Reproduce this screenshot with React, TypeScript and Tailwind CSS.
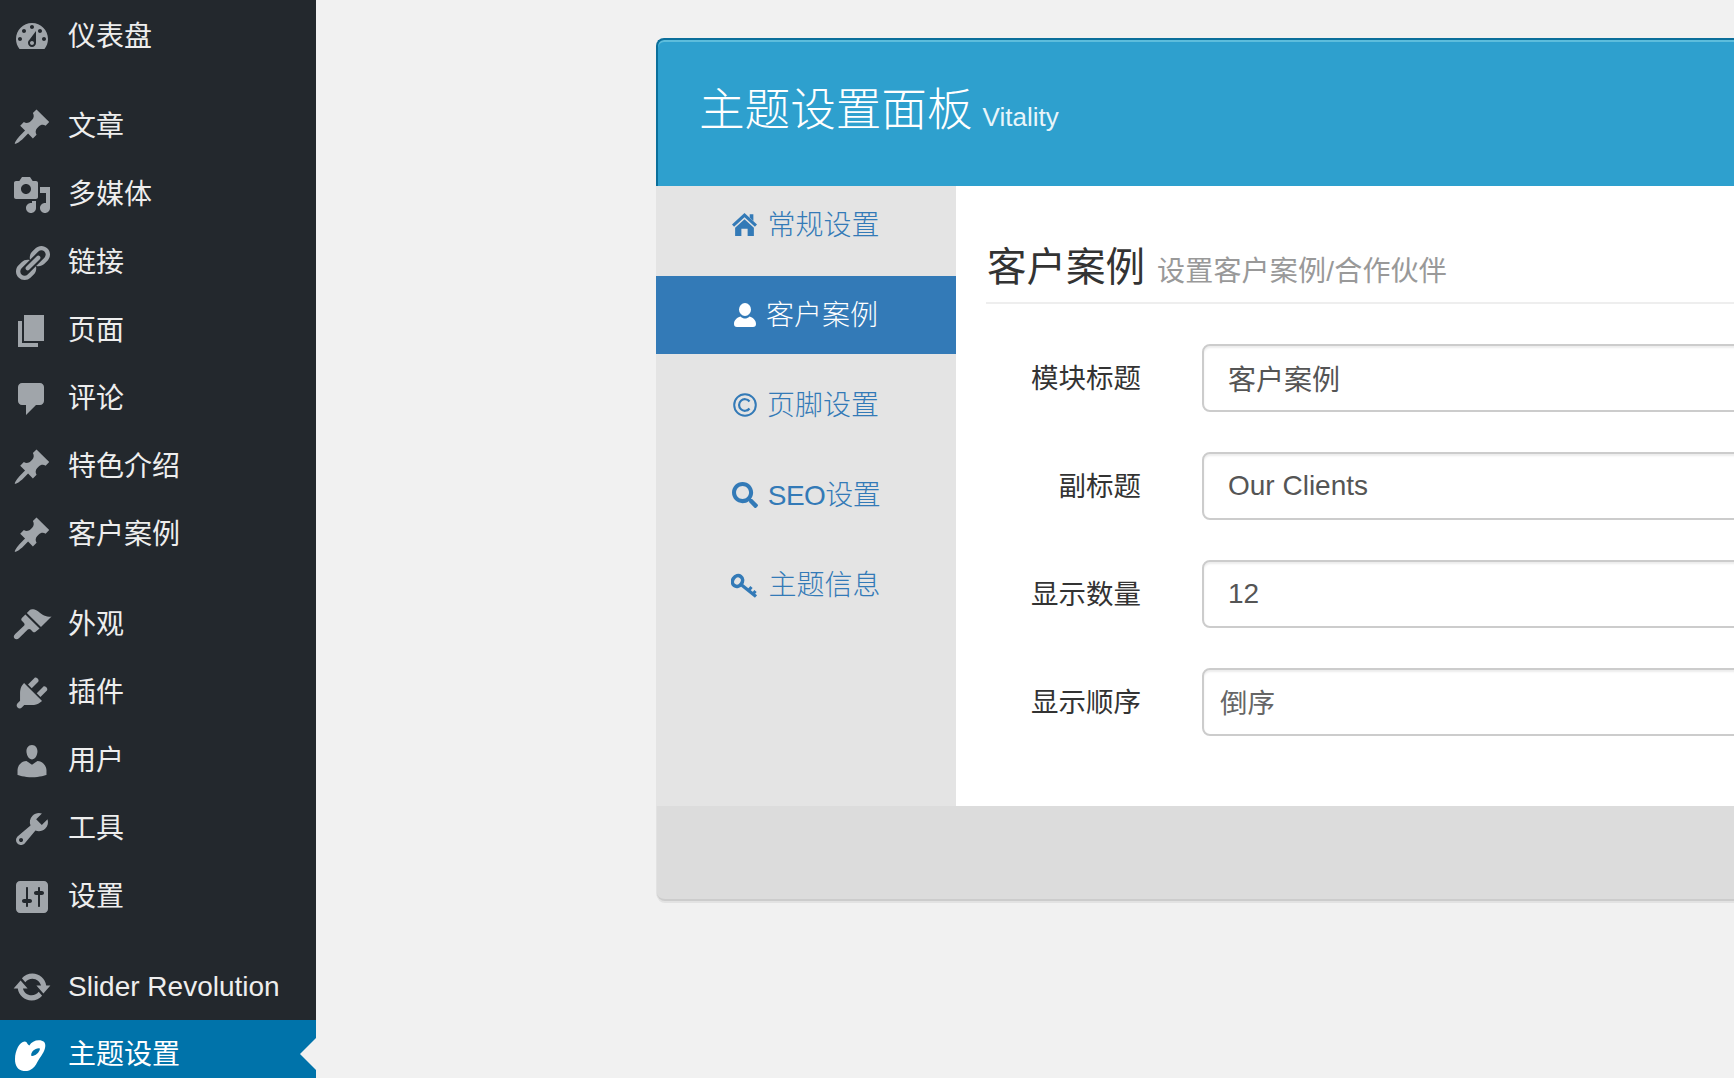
import React from "react";
import { FaSearch } from "react-icons/fa";

const dashicons: Record<string, string> = {
  dashboard:
    "M3.76 16h12.48c1.1-1.37 1.76-3.11 1.76-5 0-4.42-3.58-8-8-8s-8 3.58-8 8c0 1.89.66 3.63 1.76 5zM10 4c.55 0 1 .45 1 1s-.45 1-1 1-1-.45-1-1 .45-1 1-1zM6 6c.55 0 1 .45 1 1s-.45 1-1 1-1-.45-1-1 .45-1 1-1zm8 0c.55 0 1 .45 1 1s-.45 1-1 1-1-.45-1-1 .45-1 1-1zm-5.37 5.55L12 7v6c0 1.1-.9 2-2 2s-2-.9-2-2c0-.57.24-1.08.63-1.45zM4 10c.55 0 1 .45 1 1s-.45 1-1 1-1-.45-1-1 .45-1 1-1zm12 0c.55 0 1 .45 1 1s-.45 1-1 1-1-.45-1-1 .45-1 1-1zm-5 3c0-.55-.45-1-1-1s-1 .45-1 1 .45 1 1 1 1-.45 1-1z",
  post: "M10.44 3.02l1.82-1.82 6.36 6.35-1.83 1.82c-1.05-.68-2.48-.57-3.41.36l-.75.75c-.92.93-1.04 2.35-.35 3.41l-1.83 1.82-2.41-2.41-2.8 2.79c-.42.42-3.38 2.71-3.8 2.29s1.86-3.39 2.28-3.81l2.79-2.79L4.1 9.36l1.83-1.82c1.05.69 2.48.57 3.4-.36l.75-.75c.93-.92 1.05-2.35.36-3.41z",
  media:
    "M13 11V4c0-.55-.45-1-1-1h-1.67L9 1H5L3.67 3H2c-.55 0-1 .45-1 1v7c0 .55.45 1 1 1h10c.55 0 1-.45 1-1zM7 4.5c1.38 0 2.5 1.12 2.5 2.5S8.38 9.5 7 9.5 4.5 8.38 4.5 7 5.62 4.5 7 4.5zM14 6h5v10.5c0 1.38-1.12 2.5-2.5 2.5S14 17.88 14 16.5s1.12-2.5 2.5-2.5c.17 0 .34.02.5.05V9h-3V6zm-4 8.05V13h2v3.5c0 1.38-1.12 2.5-2.5 2.5S7 17.88 7 16.5 8.12 14 9.5 14c.17 0 .34.02.5.05z",
  links:
    "M17.74 2.76c1.68 1.69 1.68 4.41 0 6.1l-1.53 1.52c-1.12 1.12-2.7 1.47-4.14 1.09l2.62-2.61.76-.77.76-.76c.84-.84.84-2.2 0-3.04-.84-.85-2.2-.85-3.04 0l-.77.76-3.38 3.38c-.37-1.44-.02-3.02 1.1-4.14l1.52-1.53c1.69-1.68 4.42-1.68 6.1 0zM8.59 13.43l5.34-5.34c.42-.42.42-1.1 0-1.52-.44-.43-1.13-.39-1.53 0l-5.33 5.34c-.42.42-.42 1.1 0 1.52.44.43 1.13.39 1.52 0zm-.76 2.29l4.14-4.15c.38 1.44.03 3.02-1.09 4.14l-1.52 1.53c-1.69 1.68-4.41 1.68-6.1 0-1.68-1.68-1.68-4.42 0-6.1l1.53-1.52c1.12-1.12 2.7-1.47 4.14-1.1l-4.14 4.15c-.85.84-.85 2.2 0 3.05.84.84 2.2.84 3.04 0z",
  page: "M6 15V2h10v13H6zm-1 1h8v2H3V5h2v11z",
  comments:
    "M5 2h9c1.1 0 2 .9 2 2v7c0 1.1-.9 2-2 2h-2l-5 5v-5H5c-1.1 0-2-.9-2-2V4c0-1.1.9-2 2-2z",
  appearance:
    "M14.48 11.06L7.41 3.99l1.5-1.5c.5-.56 2.3-.47 3.51.32 1.21.8 1.43 1.28 2.91 2.1 1.18.64 2.45 1.26 4.45.85zM13.77 11.77L6.7 4.7 4.93 6.47c-.39.39-.39 1.02 0 1.41l1.06 1.06c.39.39.39 1.03 0 1.42l-4.4 4.2c-.8.75-.9 1.6-.3 2.2.6.6 1.5.5 2.3-.3l4.3-4.2c.39-.39 1.03-.39 1.42 0l1.06 1.06c.39.39 1.02.39 1.41 0z",
  plugins:
    "M13.11 4.36L9.87 7.6 8 5.73l3.24-3.24c.35-.34 1.05-.2 1.56.32.52.51.66 1.21.31 1.55zm-8 1.77l.91-1.12 9.01 9.01-1.19.84c-.71.71-2.63 1.16-3.82 1.16H6.14L4.9 17.26c-.59.59-1.54.59-2.12 0-.59-.58-.59-1.53 0-2.12l1.24-1.24v-3.88c0-1.13.4-3.19 1.09-3.89zm7.26 3.97l3.24-3.24c.34-.35 1.04-.21 1.55.31.52.51.66 1.21.31 1.55l-3.24 3.25z",
  users:
    "M10 9.25c-2.27 0-2.73-3.44-2.73-3.44C7 4.02 7.82 2 9.97 2c2.16 0 2.98 2.02 2.71 3.81 0 0-.41 3.44-2.68 3.44zm0 2.57L12.72 10c2.39 0 4.52 2.33 4.52 4.53v2.49s-3.65 1.13-7.24 1.13c-3.65 0-7.24-1.13-7.24-1.13v-2.49c0-2.25 1.94-4.48 4.47-4.48z",
  tools:
    "M16.68 9.77c-1.34 1.34-3.3 1.67-4.95.99l-5.41 6.52c-.99.99-2.59.99-3.58 0s-.99-2.59 0-3.57l6.52-5.42c-.68-1.65-.35-3.61.99-4.95 1.28-1.28 3.12-1.62 4.72-1.06l-2.89 2.89 2.82 2.82 2.86-2.87c.53 1.58.18 3.39-1.08 4.65zM3.81 16.21c.4.39 1.04.39 1.43 0 .4-.4.4-1.04 0-1.43-.39-.4-1.03-.4-1.43 0-.39.39-.39 1.03 0 1.43z",
  settings:
    "M18 16V4c0-1.1-.9-2-2-2H4c-1.1 0-2 .9-2 2v12c0 1.1.9 2 2 2h12c1.1 0 2-.9 2-2zM8 11h1c.55 0 1 .45 1 1s-.45 1-1 1H8v1.5c0 .28-.22.5-.5.5s-.5-.22-.5-.5V13H6c-.55 0-1-.45-1-1s.45-1 1-1h1V5.5c0-.28.22-.5.5-.5s.5.22.5.5V11zm5-2h-1c-.55 0-1-.45-1-1s.45-1 1-1h1V5.5c0-.28.22-.5.5-.5s.5.22.5.5V7h1c.55 0 1 .45 1 1s-.45 1-1 1h-1v5.5c0 .28-.22.5-.5.5s-.5-.22-.5-.5V9z",
  update:
    "M10.2 3.28c3.53 0 6.43 2.61 6.92 6h2.08l-3.5 4-3.5-4h2.32c-.45-1.97-2.21-3.44-4.32-3.44-1.45 0-2.73.71-3.54 1.78L4.95 5.66C6.23 4.2 8.11 3.28 10.2 3.28zm-.4 13.44c-3.52 0-6.43-2.61-6.92-6H.8l3.5-4c1.17 1.33 2.33 2.67 3.5 4H5.48c.45 1.97 2.21 3.44 4.32 3.44 1.45 0 2.73-.71 3.54-1.78l1.71 1.95c-1.28 1.46-3.15 2.39-5.25 2.39z",
  art: "M8.67 5.2C9.6 3.6 11.4 2.6 13.4 2.6c2.2 0 3.6 1 3.2 3.400C16.200 8.600 14.400 10.600 13.200 12.600 12.400 14 11.800 15.400 10.400 16.600 9 17.800 7.400 18.200 5.800 18 3 17.700 1.400 15.300 1.500 12 1.600 8 3.600 3.400 6.400 3.300 7.600 3.300 7.600 5 8.670 5.200zM9.600 10C9.600 8.400 11.200 6.800 13.400 6.600 13.900 6.600 14 6.800 13.900 7.200 13.500 8.800 11.800 10.300 10.100 10.500 9.700 10.500 9.600 10.300 9.600 10z",
};

function Dashicon({ name, active }: { name: string; active?: boolean }) {
  return (
    <svg
      viewBox="0 0 20 20"
      className={`w-10 h-10 shrink-0 ${active ? "text-white" : "text-[#a0a5aa]"}`}
      fill="currentColor"
      fillRule={name === "art" ? "evenodd" : undefined}
    >
      <path d={dashicons[name]} />
    </svg>
  );
}

function HomeIcon() {
  return (
    <svg viewBox="0 0 24 24" className="w-[25px] h-[25px] mb-[3px]" fill="currentColor">
      <path d="M12 2l12 11-2 2-10-9-10 9-2-2z" />
      <path d="M17 3h3.5v6.5L17 6.3z" />
      <path d="M12 8l9 8v8h-6v-7H9v7H3v-8z" />
    </svg>
  );
}

function UserIcon() {
  return (
    <svg viewBox="0 0 22 24" className="w-[22px] h-6" fill="currentColor">
      <ellipse cx="11" cy="6.5" rx="6" ry="6.5" />
      <path d="M3 24c-2 0-3-1-3-3 0-4 3-6.5 6.5-7.500 1.500 1.500 3 2 4.500 2s3-.5 4.500-2c3.500 1 6.500 3.500 6.500 7.500 0 2-1 3-3 3z" />
    </svg>
  );
}

function CopyrightIcon() {
  return (
    <svg viewBox="0 0 24 24" className="w-6 h-6" fill="none" stroke="currentColor">
      <circle cx="12" cy="12" r="10.800" strokeWidth="2" />
      <path d="M16.500 8.500a5.800 5.800 0 1 0 0 7" strokeWidth="2.200" />
    </svg>
  );
}

function KeyIcon() {
  return (
    <svg viewBox="0 0 27 27" className="w-[27px] h-[27px]" fill="none" stroke="currentColor">
      <ellipse cx="6.500" cy="9" rx="4.800" ry="5.600" strokeWidth="3.600" transform="rotate(35 6.500 9)" />
      <path d="M10 12.500L25 24.500" strokeWidth="3.400" />
      <path d="M17.500 18.500l3-3.500M22 22l2.500-3" strokeWidth="3" />
    </svg>
  );
}

const menuGroups = [
  [{ icon: "dashboard", label: "仪表盘" }],
  [
    { icon: "post", label: "文章" },
    { icon: "media", label: "多媒体" },
    { icon: "links", label: "链接" },
    { icon: "page", label: "页面" },
    { icon: "comments", label: "评论" },
    { icon: "post", label: "特色介绍" },
    { icon: "post", label: "客户案例" },
  ],
  [
    { icon: "appearance", label: "外观" },
    { icon: "plugins", label: "插件" },
    { icon: "users", label: "用户" },
    { icon: "tools", label: "工具" },
    { icon: "settings", label: "设置" },
  ],
];

const tabs = [
  { icon: <HomeIcon />, label: "常规设置" },
  { icon: <UserIcon />, label: "客户案例", active: true },
  { icon: <CopyrightIcon />, label: "页脚设置" },
  { icon: <FaSearch className="w-[26px] h-[26px]" />, label: "SEO设置", tight: true },
  { icon: <KeyIcon />, label: "主题信息" },
];

const fields = [
  { label: "模块标题", value: "客户案例" },
  { label: "副标题", value: "Our Clients" },
  { label: "显示数量", value: "12" },
];

export default function App() {
  return (
    <div className="flex h-[1078px] overflow-hidden bg-[#f1f1f1] font-['Liberation_Sans','Noto_Sans_CJK_SC',sans-serif]">
      <div className="w-[316px] shrink-0 bg-[#23282d] pt-[2px]">
        {menuGroups.map((group, i) => (
          <div key={i} className="mb-[22px]">
            {group.map((item) => (
              <div key={item.label + item.icon} className="flex items-center h-[68px] pl-3 pt-[2px] gap-4 text-[28px] text-[#eeeeee]">
                <Dashicon name={item.icon} />
                <span>{item.label}</span>
              </div>
            ))}
          </div>
        ))}
        <div className="flex items-center h-[68px] pl-3 pt-[2px] gap-4 text-[28px] text-[#eeeeee]">
          <Dashicon name="update" />
          <span>Slider Revolution</span>
        </div>
        <div className="relative flex items-center h-[68px] pl-3 pt-[2px] gap-4 text-[28px] text-white bg-[#0073aa]">
          <Dashicon name="art" active />
          <span>主题设置</span>
          <div className="absolute right-0 top-[18px] border-y-[16px] border-r-[16px] border-y-transparent border-r-[#f1f1f1]" />
        </div>
      </div>

      <div className="flex-1 min-w-0 overflow-hidden pl-[340px] pt-[38px]">
        <div className="w-[1400px]">
          <div className="h-[148px] rounded-t-lg border-t-2 border-l-2 border-[#0b6f9b] bg-[#2ea0ce] shadow-[inset_0_2px_0_#5dbddc] pl-[41px] pt-[33px] flex items-baseline gap-[10px] text-white">
            <h1 className="text-[45.6px] leading-[76px] font-light">主题设置面板</h1>
            <span className="text-[26px] text-[#e8f5fa]">Vitality</span>
          </div>

          <div className="flex h-[620px] bg-white">
            <div className="w-[300px] shrink-0 bg-[#e4e4e4] flex flex-col gap-3">
              {tabs.map((tab) => (
                <div
                  key={tab.label}
                  className={`flex items-center justify-center gap-[10px] h-[78px] text-[28px] font-light ${tab.active ? "bg-[#337ab7] text-white" : "text-[#337ab7]"}`}
                >
                  {tab.icon}
                  <span className={`pt-[2px] ${tab.tight ? "tracking-[-0.55px]" : ""}`}>{tab.label}</span>
                </div>
              ))}
            </div>

            <div className="flex-1 pl-[30px]">
              <div className="flex items-baseline gap-3 pl-px pt-[59px] pb-[9px] border-b-2 border-[#eeeeee]">
                <h2 className="text-[39.5px] leading-[44px] text-[#333333]">客户案例</h2>
                <span className="text-[28px] tracking-[0.2px] text-[#999999]">设置客户案例/合作伙伴</span>
              </div>

              <div className="mt-10 flex flex-col gap-10">
                {fields.map((f) => (
                  <div key={f.label} className="flex items-center gap-[61px]">
                    <label className="w-[155px] pt-[2px] text-right text-[27.5px] text-[#333333]">{f.label}</label>
                    <input
                      readOnly
                      value={f.value}
                      className="flex-1 h-[68px] px-6 border-2 border-[#cccccc] rounded-lg text-[28px] text-[#555555] shadow-[inset_0_2px_2px_rgba(0,0,0,0.075)] outline-none"
                    />
                  </div>
                ))}
                <div className="flex items-center gap-[61px]">
                  <label className="w-[155px] pt-[2px] text-right text-[27.5px] text-[#333333]">显示顺序</label>
                  <select className="flex-1 h-[68px] pl-[16px] pt-[4px] border-2 border-[#cccccc] rounded-lg text-[27.5px] text-[#666666] bg-white appearance-none shadow-[inset_0_2px_2px_rgba(0,0,0,0.075)] outline-none">
                    <option>倒序</option>
                  </select>
                </div>
              </div>
            </div>
          </div>

          <div className="ml-px h-[95px] rounded-b-lg bg-[#dcdcdc] border-b-2 border-[#cccccc] shadow-[0_2px_0_#e2e2e2,-1px_0_0_#e2e2e2]" />
        </div>
      </div>
    </div>
  );
}
